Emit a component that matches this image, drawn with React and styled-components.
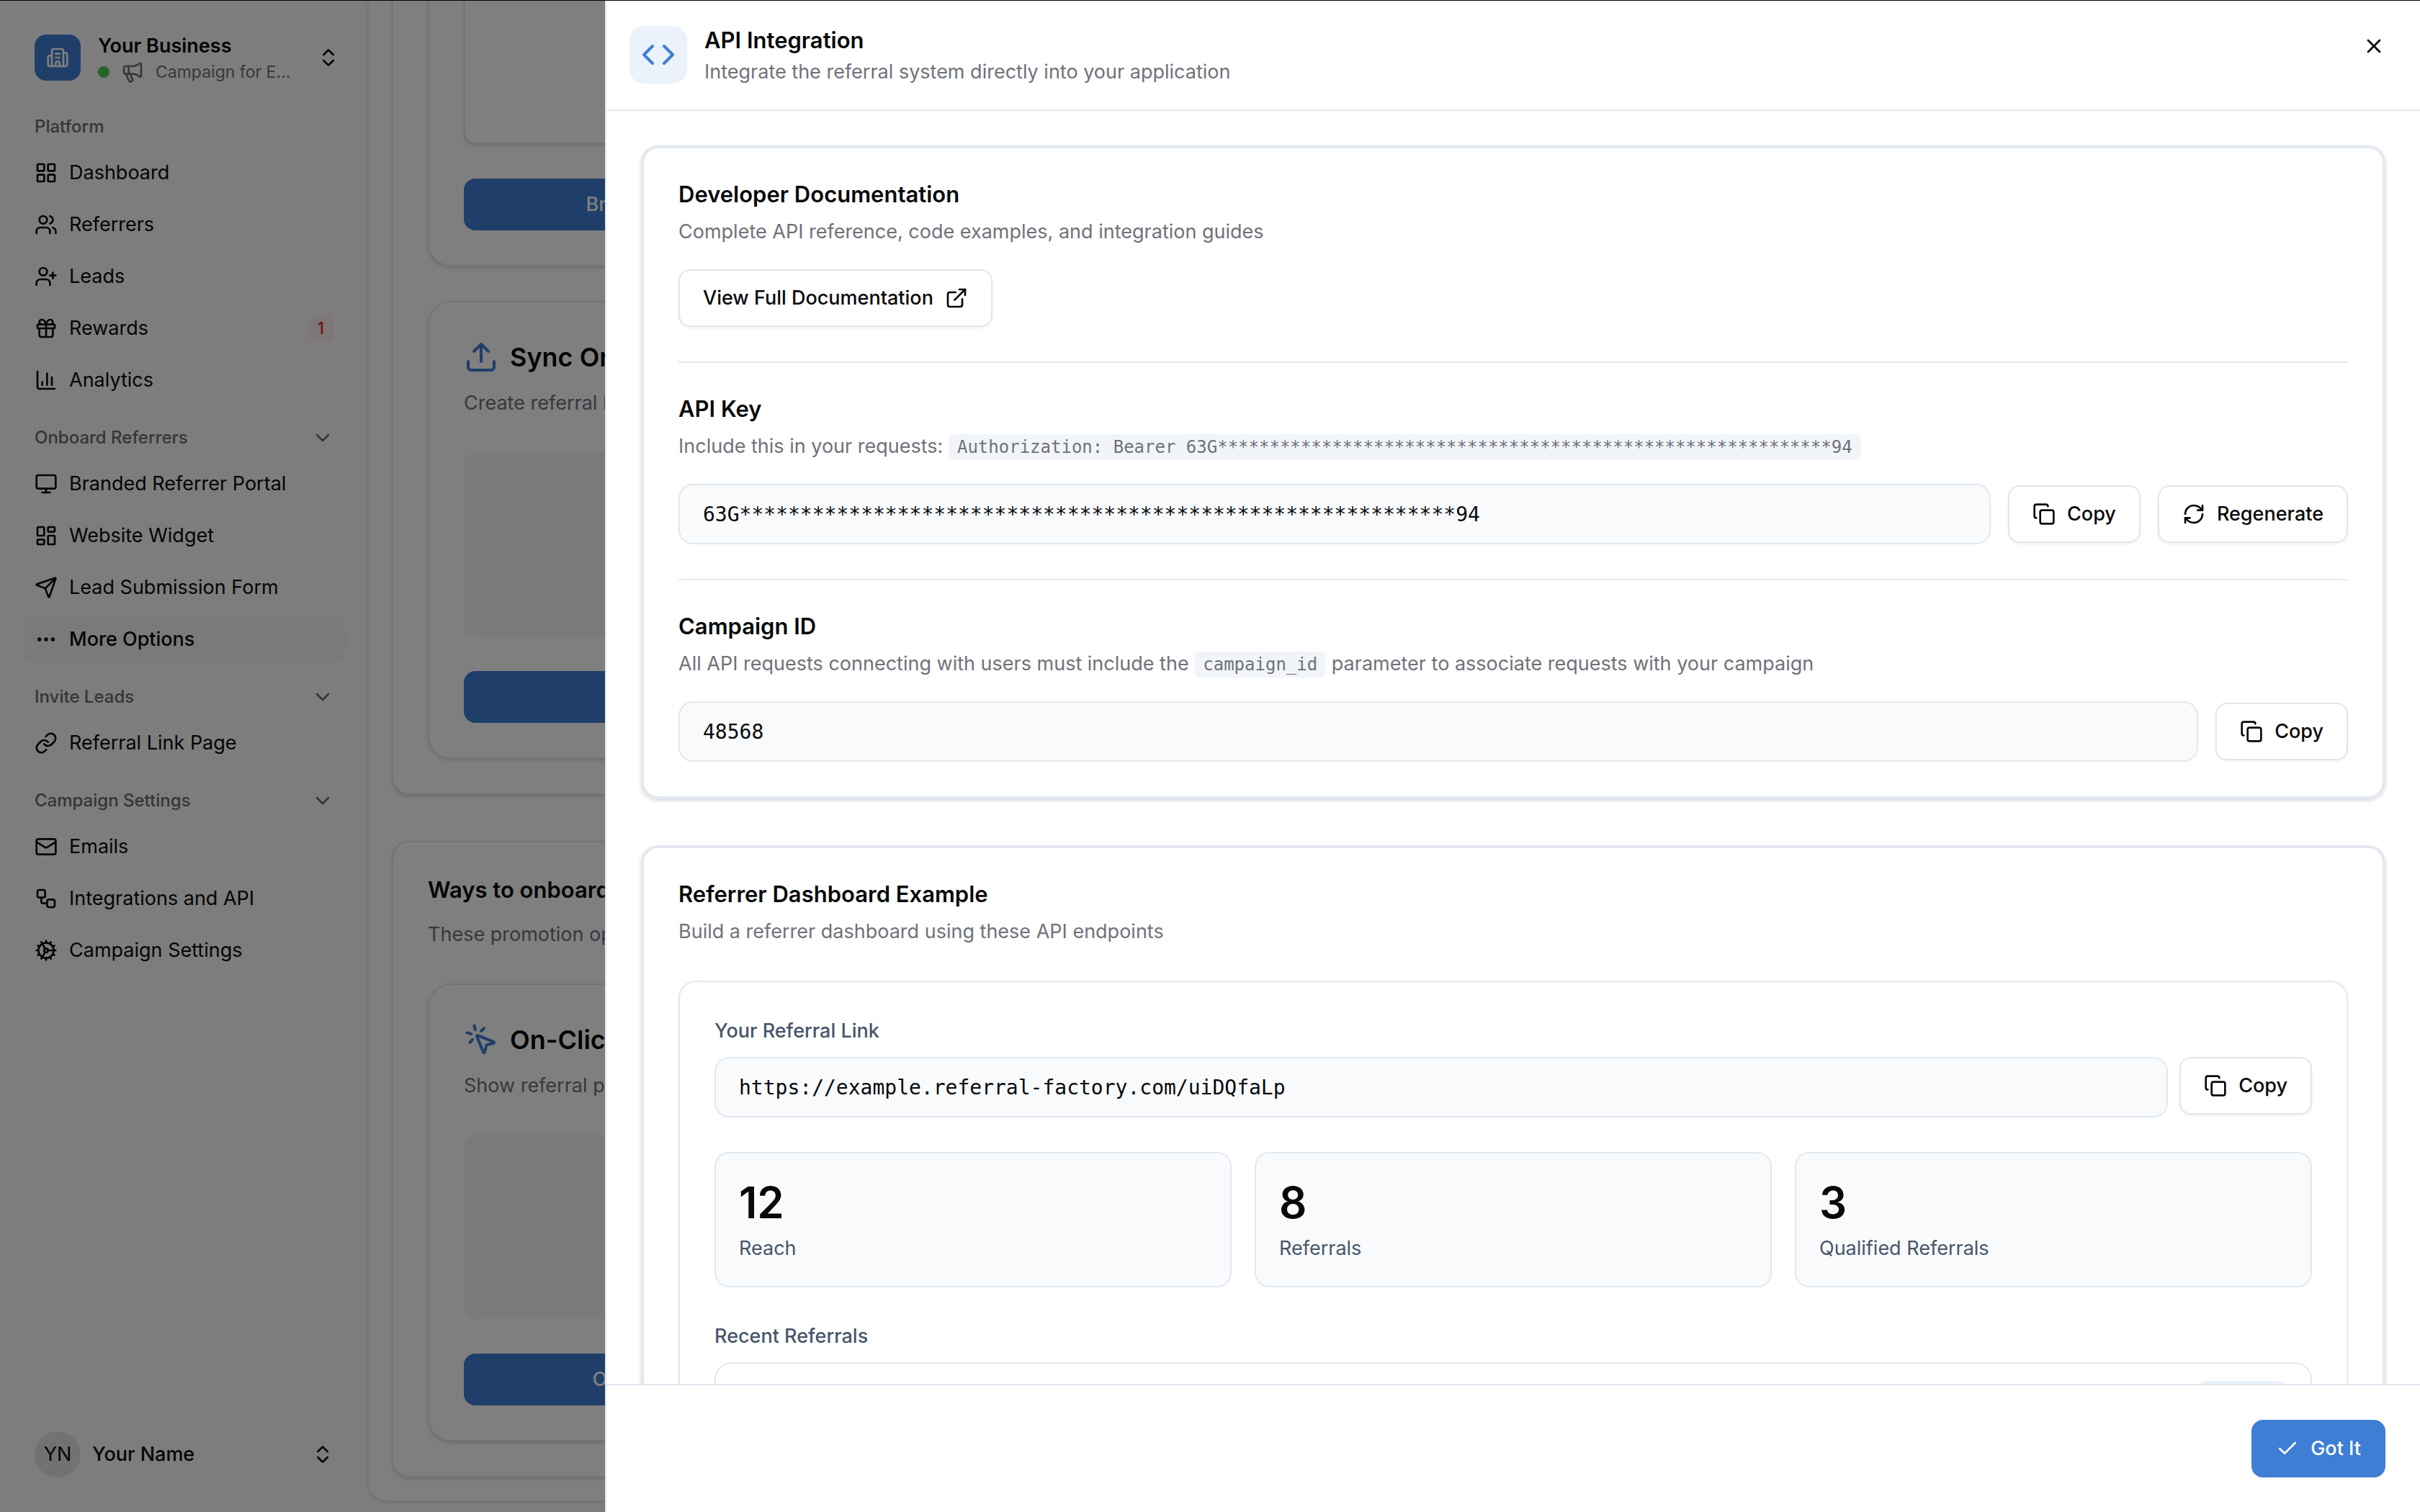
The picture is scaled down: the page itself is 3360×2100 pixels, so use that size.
import React from "react";
import styled, { createGlobalStyle } from "styled-components";
import {
  Building2, Megaphone, ChevronsUpDown, ChevronDown, LayoutGrid, Users, UserPlus, Gift,
  ChartColumn, Monitor, LayoutDashboard, Send, Ellipsis, Link, Mail, Workflow, Cog,
  Upload, MousePointerClick, Code, X, ExternalLink, Copy, RefreshCw, Check,
} from "lucide-react";

const c = {
  ink: "#09090b",
  muted: "#71717a",
  slate: "#475569",
  line: "#e2e8f0",
  control: "#e5e5e5",
  soft: "#f8fafc",
  chip: "#f1f5f9",
  primary: "#3e7ed4",
};
const sans = `Inter, "Liberation Sans", sans-serif`;
const mono = `"DejaVu Sans Mono", "Liberation Mono", monospace`;
const shadow = "0 2px 6px rgba(0, 0, 0, 0.1), 0 2px 4px rgba(0, 0, 0, 0.06)";
const softShadow = "0 2px 4px rgba(0, 0, 0, 0.05)";

const GlobalStyle = createGlobalStyle`
  *, *::before, *::after { box-sizing: border-box; }
  body { margin: 0; background: #fafafa; color: ${c.ink}; font-family: ${sans}; font-size: 27px; line-height: 40px; }
  h1, h2, h3, p, ul { margin: 0; padding: 0; font-size: inherit; font-weight: inherit; }
  ul { list-style: none; }
  button, input { font: inherit; color: inherit; margin: 0; }
  a { color: inherit; text-decoration: none; }
  svg { flex: none; display: block; }
`;

/* Shell */
const Shell = styled.div`
  position: relative;
  height: 100vh;
  overflow: hidden;
  &::before {
    content: "";
    position: absolute;
    inset: 0 0 auto;
    height: 1px;
    background: #000;
    z-index: 3;
  }
`;
const Page = styled.div`
  display: flex;
  height: 100%;
`;
const Overlay = styled.div`
  position: absolute;
  inset: 0;
  background: rgba(0, 0, 0, 0.5);
  z-index: 1;
`;

/* Sidebar */
const Sidebar = styled.aside`
  flex: none;
  width: 512px;
  padding: 48px 32px;
  display: flex;
  flex-direction: column;
  justify-content: space-between;
`;
const Groups = styled.nav`
  display: flex;
  flex-direction: column;
  gap: 16px;
  margin-top: 32px;
`;
const Switcher = styled.button`
  display: flex;
  align-items: center;
  gap: ${(p) => p.$gap}px;
  width: 100%;
  padding: 0 ${(p) => p.$end}px 0 16px;
  border: 0;
  background: none;
  text-align: left;
`;
const Logo = styled.span`
  display: grid;
  place-items: center;
  flex: none;
  width: 64px;
  height: 64px;
  border-radius: 16px;
  background: ${c.primary};
  color: #fff;
`;
const Avatar = styled(Logo)`
  border-radius: 50%;
  background: #e5e5e5;
  color: ${c.ink};
`;
const SwitcherText = styled.span`
  display: flex;
  flex-direction: column;
  flex: 1;
  min-width: 0;
  margin: -6px 0;
  padding-top: 4px;
`;
const SwitcherName = styled.span`
  flex: 1;
  font-weight: ${(p) => p.$weight};
  line-height: 36px;
`;
const Campaign = styled.span`
  display: flex;
  align-items: center;
  gap: 16px;
  padding-right: 8px;
  color: ${c.muted};
  font-size: 23px;
  line-height: 36px;
`;
const Dot = styled.span`
  flex: none;
  width: 16px;
  height: 16px;
  border-radius: 50%;
  background: #50c85c;
`;
const Truncate = styled.span`
  min-width: 0;
  overflow: hidden;
  white-space: nowrap;
  text-overflow: ellipsis;
`;
const GroupLabel = styled.h2`
  display: flex;
  align-items: center;
  justify-content: space-between;
  height: 64px;
  padding: 0 16px;
  font-size: 24px;
  font-weight: 500;
  color: #6b6b6e;
`;
const Items = styled.ul`
  display: flex;
  flex-direction: column;
  gap: 8px;
`;
const Item = styled.a`
  display: flex;
  align-items: center;
  gap: 16px;
  height: 64px;
  padding: 0 16px;
  border-radius: 16px;
  background: ${(p) => (p.$active ? "#f4f4f5" : "transparent")};
  font-weight: ${(p) => (p.$active ? 500 : 400)};
`;
const Count = styled.span`
  margin-left: auto;
  padding: 0 14px;
  border-radius: 16px;
  background: #fdeeee;
  color: #dc2626;
  font-size: 23px;
  font-weight: 500;
`;

/* Main page */
const Main = styled.main`
  flex: 1;
  min-width: 0;
  display: flex;
  flex-direction: column;
  justify-content: flex-end;
  padding: 0 16px 16px 0;
`;
const Panel = styled.div`
  flex: none;
  display: flex;
  flex-direction: column;
  gap: 64px;
  padding: 32px;
  border-radius: 24px;
  background: #fff;
  box-shadow: ${shadow};
`;
const Section = styled.section`
  padding: 48px;
  border: 2px solid ${c.line};
  border-radius: 24px;
  box-shadow: ${shadow};
`;
const SectionTitle = styled.h2`
  font-size: 31px;
  line-height: 36px;
  font-weight: 600;
`;
const SectionText = styled.p`
  margin: 24px 0 48px;
  color: ${c.muted};
`;
const OptionGrid = styled.div`
  display: grid;
  grid-template-columns: repeat(4, 1fr);
  gap: 48px;
  & + & { margin-top: 48px; }
`;
const Option = styled.article`
  padding: 48px;
  border: 2px solid ${c.line};
  border-radius: 32px;
  box-shadow: ${shadow};
`;
const OptionTitle = styled.h3`
  display: flex;
  align-items: center;
  gap: 16px;
  font-size: 36px;
  line-height: 56px;
  font-weight: 600;
  white-space: nowrap;
  svg { color: ${c.primary}; }
`;
const OptionText = styled.p`
  margin: 16px 0 48px;
  color: ${c.muted};
`;
const Preview = styled.div`
  height: 256px;
  border-radius: 16px;
  background: #f4f4f5;
`;
const PortalPreview = styled(Preview)`
  height: 320px;
  border: 2px solid ${c.line};
  background: #fff;
  box-shadow: ${shadow};
`;
const OptionButton = styled.button`
  display: block;
  width: 100%;
  height: 72px;
  margin-top: 48px;
  border: 0;
  border-radius: 16px;
  background: ${c.primary};
  color: #fff;
  font-weight: 500;
`;

/* Drawer */
const Drawer = styled.div`
  position: absolute;
  inset: 0 0 0 auto;
  z-index: 2;
  width: 75%;
  display: flex;
  flex-direction: column;
  border-left: 2px solid ${c.line};
  background: #fff;
`;
const DrawerHeader = styled.header`
  flex: none;
  display: flex;
  align-items: flex-start;
  gap: 24px;
  padding: 36px 48px 32px 32px;
  border-bottom: 2px solid ${c.line};
`;
const HeaderIcon = styled.span`
  display: grid;
  place-items: center;
  width: 80px;
  height: 80px;
  border-radius: 20px;
  background: #ebf2fb;
  color: ${c.primary};
`;
const HeaderText = styled.div`
  flex: 1;
  display: flex;
  flex-direction: column;
  gap: 4px;
`;
const DrawerTitle = styled.h1`
  font-size: 31px;
  line-height: 40px;
  font-weight: 600;
`;
const Muted = styled.p`
  color: ${c.muted};
`;
const CloseButton = styled.button`
  display: flex;
  margin-top: 12px;
  padding: 0;
  border: 0;
  background: none;
`;
const DrawerBody = styled.div`
  flex: 1;
  min-height: 0;
  overflow: hidden;
  padding: 48px;
  display: flex;
  flex-direction: column;
  gap: 64px;
`;
const Card = styled.section`
  flex: none;
  padding: 0 48px;
  border: 4px solid ${c.line};
  border-radius: 24px;
  box-shadow: ${shadow};
`;
const Block = styled.div`
  display: flex;
  flex-direction: column;
  align-items: flex-start;
  gap: 16px;
  padding: 48px 0;
  & + & { border-top: 2px solid ${c.line}; }
`;
const BlockTitle = styled.h2`
  font-size: 31px;
  line-height: 32px;
  font-weight: 600;
`;
const Chip = styled.code`
  padding: 4px 12px;
  border-radius: 8px;
  background: ${c.chip};
  font-family: ${mono};
  font-size: 24px;
  line-height: 28px;
`;
const Row = styled.div`
  display: flex;
  align-items: ${(p) => p.$align || "center"};
  gap: ${(p) => p.$gap || 24}px;
  width: 100%;
  margin-top: ${(p) => p.$top || 0}px;
`;
const Field = styled.input`
  flex: 1;
  min-width: 0;
  height: 84px;
  padding: 0 32px;
  border: 2px solid ${c.line};
  border-radius: 20px;
  background: ${c.soft};
  font-family: ${mono};
  font-size: 28px;
`;
const Button = styled.button`
  flex: none;
  display: inline-flex;
  align-items: center;
  gap: 16px;
  height: 80px;
  padding: 0 32px;
  border: 2px solid ${(p) => (p.$primary ? c.primary : c.control)};
  border-radius: 16px;
  background: ${(p) => (p.$primary ? c.primary : "#fff")};
  color: ${(p) => (p.$primary ? "#fff" : c.ink)};
  font-weight: 500;
  box-shadow: ${softShadow};
`;
const DocsLink = styled(Button)`
  margin-top: 16px;
`;
const Example = styled.div`
  width: 100%;
  margin-top: 32px;
  padding: 48px;
  border: 2px solid ${c.line};
  border-radius: 24px;
  box-shadow: ${softShadow};
  display: flex;
  flex-direction: column;
  gap: 48px;
`;
const ExampleGroup = styled.div`
  display: flex;
  flex-direction: column;
  gap: 16px;
`;
const ExampleLabel = styled.label`
  color: ${c.slate};
  font-weight: 500;
`;
const Stats = styled.div`
  display: grid;
  grid-template-columns: repeat(3, 1fr);
  gap: 32px;
`;
const Stat = styled.div`
  padding: 32px;
  border: 2px solid ${c.line};
  border-radius: 20px;
  background: ${c.soft};
  display: flex;
  flex-direction: column;
  gap: 8px;
`;
const StatValue = styled.strong`
  font-size: 60px;
  line-height: 72px;
  font-weight: 600;
`;
const StatLabel = styled.span`
  color: ${c.slate};
`;
const ReferralList = styled.ul`
  border: 2px solid ${c.line};
  border-radius: 24px;
`;
const ReferralRow = styled.li`
  display: flex;
  justify-content: flex-end;
  padding: 24px 32px;
`;
const Status = styled.span`
  width: 128px;
  height: 40px;
  border-radius: 16px;
  background: #ebf1fc;
`;
const DrawerFooter = styled.footer`
  flex: none;
  display: flex;
  justify-content: flex-end;
  padding: 48px;
  border-top: 2px solid ${c.line};
`;

const groups = [
  {
    label: "Platform",
    items: [
      [LayoutGrid, "Dashboard"],
      [Users, "Referrers"],
      [UserPlus, "Leads"],
      [Gift, "Rewards", 1],
      [ChartColumn, "Analytics"],
    ],
  },
  {
    label: "Onboard Referrers",
    collapsible: true,
    items: [
      [Monitor, "Branded Referrer Portal"],
      [LayoutDashboard, "Website Widget"],
      [Send, "Lead Submission Form"],
      [Ellipsis, "More Options"],
    ],
  },
  { label: "Invite Leads", collapsible: true, items: [[Link, "Referral Link Page"]] },
  {
    label: "Campaign Settings",
    collapsible: true,
    items: [
      [Mail, "Emails"],
      [Workflow, "Integrations and API"],
      [Cog, "Campaign Settings"],
    ],
  },
];

const apiKey = "63G" + "*".repeat(59) + "94";
const stats = [["12", "Reach"], ["8", "Referrals"], ["3", "Qualified Referrals"]];

function CopyButton() {
  return (
    <Button type="button">
      <Copy size={32} />
      Copy
    </Button>
  );
}

function AppSidebar() {
  return (
    <Sidebar>
      <div>
        <Switcher type="button" $gap={24} $end={8}>
          <Logo><Building2 size={32} /></Logo>
          <SwitcherText>
            <SwitcherName $weight={600}>Your Business</SwitcherName>
            <Campaign>
              <Dot />
              <Megaphone size={32} />
              <Truncate>Campaign for Everyone</Truncate>
            </Campaign>
          </SwitcherText>
          <ChevronsUpDown size={32} />
        </Switcher>
        <Groups>
          {groups.map((g) => (
            <div key={g.label}>
              <GroupLabel>
                {g.label}
                {g.collapsible && <ChevronDown size={32} />}
              </GroupLabel>
              <Items>
                {g.items.map(([Icon, name, count]) => (
                  <li key={name}>
                    <Item href="#" $active={name === "More Options"}>
                      <Icon size={32} />
                      {name}
                      {count && <Count>{count}</Count>}
                    </Item>
                  </li>
                ))}
              </Items>
            </div>
          ))}
        </Groups>
      </div>
      <Switcher type="button" $gap={16} $end={16}>
        <Avatar>YN</Avatar>
        <SwitcherName $weight={500}>Your Name</SwitcherName>
        <ChevronsUpDown size={32} />
      </Switcher>
    </Sidebar>
  );
}

function PromotePage() {
  return (
    <Main>
      <Panel>
        <Section>
          <OptionGrid>
            <Option>
              <PortalPreview />
              <OptionButton type="button">Branded Portal</OptionButton>
            </Option>
          </OptionGrid>
          <OptionGrid>
            <Option>
              <OptionTitle><Upload size={48} />Sync Orders</OptionTitle>
              <OptionText>Create referral links</OptionText>
              <Preview />
              <OptionButton type="button">Sync</OptionButton>
            </Option>
          </OptionGrid>
        </Section>
        <Section>
          <SectionTitle>Ways to onboard</SectionTitle>
          <SectionText>These promotion options</SectionText>
          <OptionGrid>
            <Option>
              <OptionTitle><MousePointerClick size={48} />On-Click</OptionTitle>
              <OptionText>Show referral prompts</OptionText>
              <Preview />
              <OptionButton type="button">On-Click Link</OptionButton>
            </Option>
          </OptionGrid>
        </Section>
      </Panel>
    </Main>
  );
}

function ApiDrawer() {
  return (
    <Drawer role="dialog" aria-labelledby="drawer-title">
      <DrawerHeader>
        <HeaderIcon><Code size={48} /></HeaderIcon>
        <HeaderText>
          <DrawerTitle id="drawer-title">API Integration</DrawerTitle>
          <Muted>Integrate the referral system directly into your application</Muted>
        </HeaderText>
        <CloseButton type="button" aria-label="Close"><X size={32} /></CloseButton>
      </DrawerHeader>
      <DrawerBody>
        <Card>
          <Block>
            <BlockTitle>Developer Documentation</BlockTitle>
            <Muted>Complete API reference, code examples, and integration guides</Muted>
            <DocsLink as="a" href="#">
              View Full Documentation
              <ExternalLink size={32} />
            </DocsLink>
          </Block>
          <Block>
            <BlockTitle as="label" htmlFor="api-key">API Key</BlockTitle>
            <Muted>
              Include this in your requests: <Chip>Authorization: Bearer {apiKey}</Chip>
            </Muted>
            <Row $top={16}>
              <Field id="api-key" readOnly value={apiKey} />
              <CopyButton />
              <Button type="button">
                <RefreshCw size={32} />
                Regenerate
              </Button>
            </Row>
          </Block>
          <Block>
            <BlockTitle as="label" htmlFor="campaign-id">Campaign ID</BlockTitle>
            <Muted>
              All API requests connecting with users must include the <Chip>campaign_id</Chip> parameter
              to associate requests with your campaign
            </Muted>
            <Row $top={16}>
              <Field id="campaign-id" readOnly value="48568" />
              <CopyButton />
            </Row>
          </Block>
        </Card>
        <Card>
          <Block>
            <BlockTitle>Referrer Dashboard Example</BlockTitle>
            <Muted>Build a referrer dashboard using these API endpoints</Muted>
            <Example>
              <ExampleGroup>
                <ExampleLabel htmlFor="referral-link">Your Referral Link</ExampleLabel>
                <Row $gap={16} $align="flex-start">
                  <Field id="referral-link" readOnly value="https://example.referral-factory.com/uiDQfaLp" />
                  <CopyButton />
                </Row>
              </ExampleGroup>
              <Stats>
                {stats.map(([value, label]) => (
                  <Stat key={label}>
                    <StatValue>{value}</StatValue>
                    <StatLabel>{label}</StatLabel>
                  </Stat>
                ))}
              </Stats>
              <ExampleGroup>
                <ExampleLabel as="h3">Recent Referrals</ExampleLabel>
                <ReferralList>
                  <ReferralRow><Status /></ReferralRow>
                </ReferralList>
              </ExampleGroup>
            </Example>
          </Block>
        </Card>
      </DrawerBody>
      <DrawerFooter>
        <Button type="button" $primary>
          <Check size={32} />
          Got It
        </Button>
      </DrawerFooter>
    </Drawer>
  );
}

export default function App() {
  return (
    <>
      <GlobalStyle />
      <Shell>
        <Page>
          <AppSidebar />
          <PromotePage />
        </Page>
        <Overlay />
        <ApiDrawer />
      </Shell>
    </>
  );
}
